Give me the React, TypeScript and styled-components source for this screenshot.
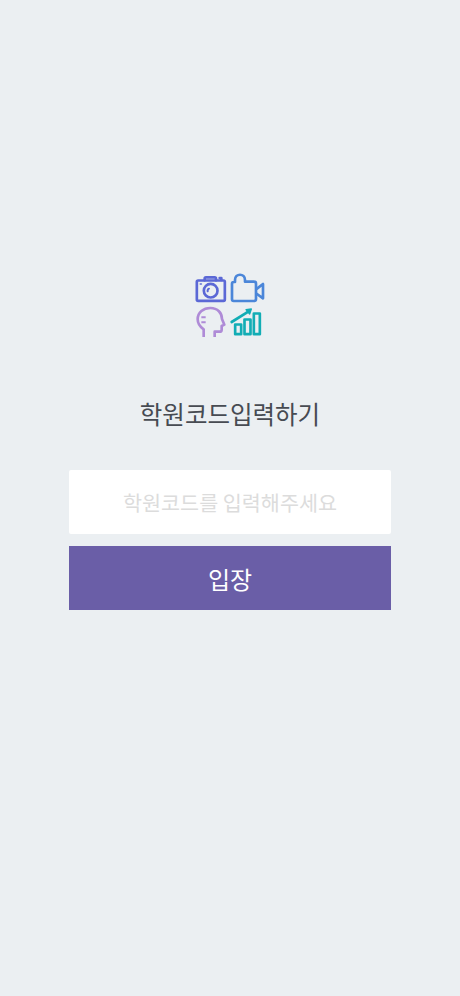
import React from 'react';
import styled, { createGlobalStyle } from 'styled-components';

const GlobalStyle = createGlobalStyle`
  * { box-sizing: border-box; }
  body {
    margin: 0;
    background: #ebeff2;
    font-family: 'Noto Sans CJK KR', 'Noto Sans', sans-serif;
  }
`;

const Page = styled.main`
  min-height: 100vh;
  display: flex;
  flex-direction: column;
  align-items: center;
  padding-top: 268px;
  background: #ebeff2;
`;

const Logo = styled.svg`
  display: block;
  width: 80px;
  height: 74px;
  fill: none;
  stroke-width: 8;
  stroke-linecap: round;
  stroke-linejoin: round;
`;

const Title = styled.h1`
  margin: 54px 0 0;
  height: 36px;
  line-height: 36px;
  font-size: 24.5px;
  font-weight: 400;
  color: #474b52;
  white-space: nowrap;
`;

const Form = styled.form`
  width: 322px;
  margin: 38px 0 0;
  display: flex;
  flex-direction: column;
  gap: 12.4px;
`;

const CodeInput = styled.input`
  width: 100%;
  height: 64px;
  padding: 0;
  border: 0;
  border-radius: 2px;
  outline: 0;
  background: #fff;
  color: #474b52;
  font: 400 20.7px 'Noto Sans CJK KR', sans-serif;
  text-align: center;

  &::placeholder {
    color: #dcdcdc;
    opacity: 1;
  }
`;

const EnterButton = styled.button`
  height: 64px;
  padding: 0;
  border: 0;
  background: #6a5ea7;
  color: #fff;
  font: 400 24px 'Noto Sans CJK KR', sans-serif;
`;

export default function App() {
  return (
    <>
      <GlobalStyle />
      <Page>
        <Logo viewBox="0 0 240 222" aria-hidden="true">
          <g stroke="#5b68d6">
            <rect x="20.500" y="37.500" width="84" height="61" rx="4" />
            <path d="M44 37V32Q44 28 48 28H74Q78 28 78 32V37M89 30H94V36" />
            <path d="M31 48H34" strokeWidth="5" />
            <circle cx="62" cy="68" r="20.500" />
            <path d="M53 70Q52 64 57 62" strokeWidth="6" />
          </g>
          <g stroke="#4b86d9">
            <path d="M126 94V47Q126 42 131 42H135V36C135 15 165 15 165 36V41H192Q198 41 198 47V93Q198 99 192 99H131Q126 99 126 94Z" />
            <path d="M201 62L219 48V91L201 78" />
          </g>
          <g stroke="#af8bd7" strokeLinecap="butt">
            <path d="M41 207V184C29 176 23 165 23 154C23 133 40 120 61 120C83 120 96 135 96 153L103 170L95 174V185Q95 191 89 191H74V207" />
            <path d="M34 148H47M34 163H47" strokeWidth="6" />
          </g>
          <g stroke="#12adb5">
            <rect x="135.500" y="169.500" width="18" height="29" />
            <rect x="163.500" y="154.500" width="18" height="44" />
            <rect x="191.500" y="136.500" width="18" height="62" />
            <path d="M125 162L176 130" />
            <path d="M168 125L184 123L179 138Z" fill="#12adb5" strokeWidth="4" />
          </g>
        </Logo>
        <Title>학원코드입력하기</Title>
        <Form onSubmit={(event) => event.preventDefault()}>
          <CodeInput type="text" placeholder="학원코드를 입력해주세요" />
          <EnterButton type="submit">입장</EnterButton>
        </Form>
      </Page>
    </>
  );
}
